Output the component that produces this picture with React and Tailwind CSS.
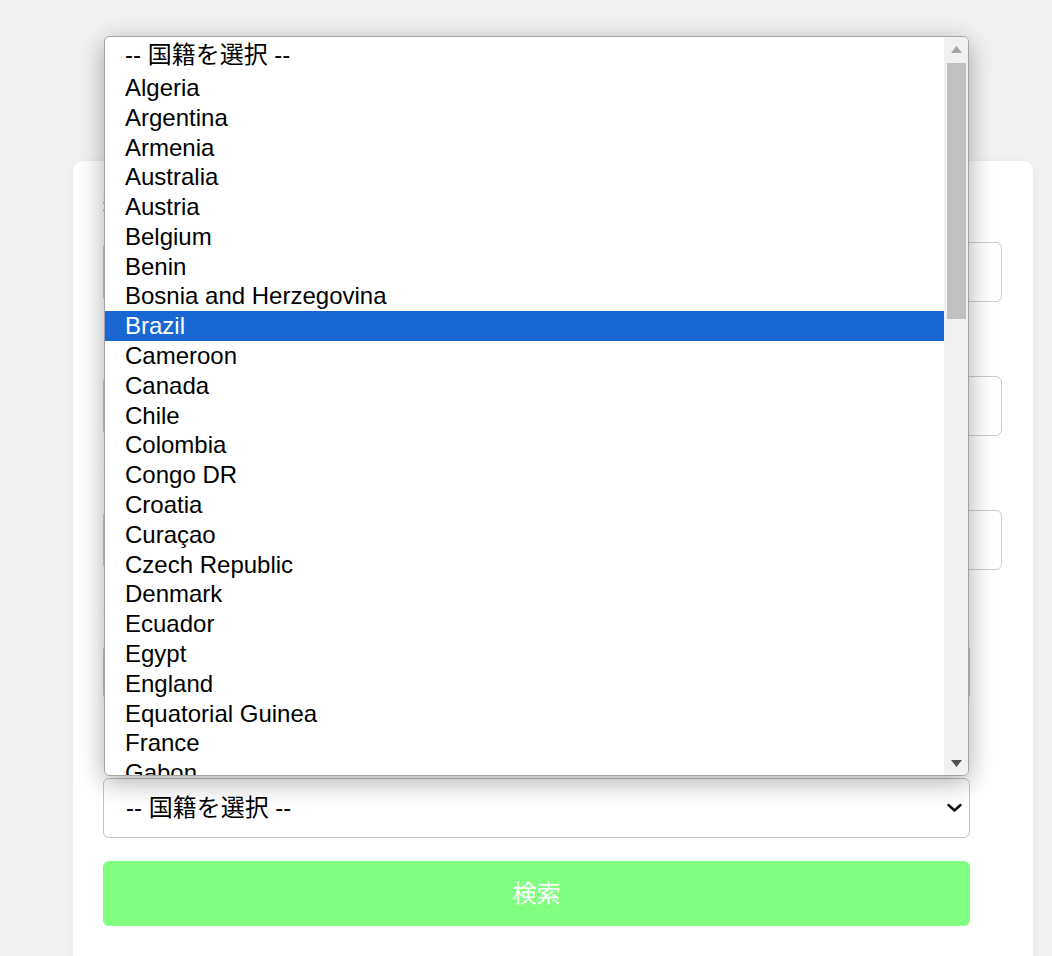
import React from "react";

const countries = [
  "Algeria",
  "Argentina",
  "Armenia",
  "Australia",
  "Austria",
  "Belgium",
  "Benin",
  "Bosnia and Herzegovina",
  "Brazil",
  "Cameroon",
  "Canada",
  "Chile",
  "Colombia",
  "Congo DR",
  "Croatia",
  "Curaçao",
  "Czech Republic",
  "Denmark",
  "Ecuador",
  "Egypt",
  "England",
  "Equatorial Guinea",
  "France",
  "Gabon",
];

const Chevron = () => (
  <svg className="w-[15px] h-[10px]" viewBox="0 0 15 10" fill="none" stroke="#111" strokeWidth={2.4}>
    <path d="M1.5 2l6 5.5 6-5.5" strokeLinecap="round" strokeLinejoin="round" />
  </svg>
);

const Field = ({ label, children, last }) => (
  <div className={last ? "mb-[27px]" : "mb-[23px]"}>
    <label className="block h-[27px] mb-[24px] text-[20px] leading-[27px] font-bold text-[#333]">
      {label}
    </label>
    {children}
  </div>
);

const FakeSelect = ({ h }) => (
  <div
    className={`${h} w-[867px] flex items-center justify-between pl-[22px] pr-[7px] border border-[#c4c4c4] rounded-[6px] bg-white text-[24px] text-black`}
  >
    <span>-- 国籍を選択 --</span>
    <Chevron />
  </div>
);

const Popup = () => (
  <div className="absolute left-[104px] top-[36px] w-[865px] h-[740px] flex bg-white border border-[#a3a3a3] rounded-[6px] overflow-hidden shadow-[0_6px_26px_rgba(0,0,0,0.33)]">
    <div className="flex-1 overflow-hidden text-[24px] text-black">
      <div className="h-[36px] pl-[20px] flex items-center">-- 国籍を選択 --</div>
      {countries.map((c) => (
        <div
          key={c}
          className={`h-[29.8px] pl-[20px] flex items-center ${
            c === "Brazil" ? "bg-[#1967d2] text-white" : ""
          }`}
        >
          {c}
        </div>
      ))}
    </div>
    {/* scrollbar */}
    <div className="w-[24px] bg-[#f1f1f1] flex flex-col items-center">
      <svg className="mt-[9px] w-[11px] h-[7px]" viewBox="0 0 11 7" fill="#a3a3a3">
        <path d="M5.5 0L11 7H0z" />
      </svg>
      <div className="mt-[10px] w-[19px] h-[256px] bg-[#c1c1c1]" />
      <div className="flex-1" />
      <svg className="mb-[8px] w-[11px] h-[7px]" viewBox="0 0 11 7" fill="#505050">
        <path d="M0 0h11L5.5 7z" />
      </svg>
    </div>
  </div>
);

export default function App() {
  return (
    <div className="relative min-h-screen bg-[#f2f2f2] pt-[161px] font-[Liberation_Sans,Noto_Sans_CJK_JP,sans-serif]">
      <div className="ml-[73px] w-[960px] bg-white rounded-[10px] shadow-[0_2px_8px_rgba(0,0,0,0.06)] px-[30px] pt-[30px] pb-[40px]">
        <Field label="選手名">
          <div className="h-[60px] w-[899px] border border-[#ccc] rounded-[6px] bg-white" />
        </Field>
        <Field label="チーム">
          <div className="h-[60px] w-[899px] border border-[#ccc] rounded-[6px] bg-white" />
        </Field>
        <Field label="背番号">
          <div className="h-[60px] w-[899px] border border-[#ccc] rounded-[6px] bg-white" />
        </Field>
        <Field label="ポジション" last>
          <FakeSelect h="h-[56px]" />
        </Field>
        <div className="mb-[23px]">
          <label className="block h-[27px] mb-[24px] text-[20px] leading-[27px] font-bold text-[#333]">
            国籍
          </label>
          <FakeSelect h="h-[60px]" />
        </div>
        <button className="w-[867px] h-[65px] rounded-[6px] bg-[#80ff80] text-white text-[24px]">
          検索
        </button>
      </div>
      <Popup />
    </div>
  );
}
